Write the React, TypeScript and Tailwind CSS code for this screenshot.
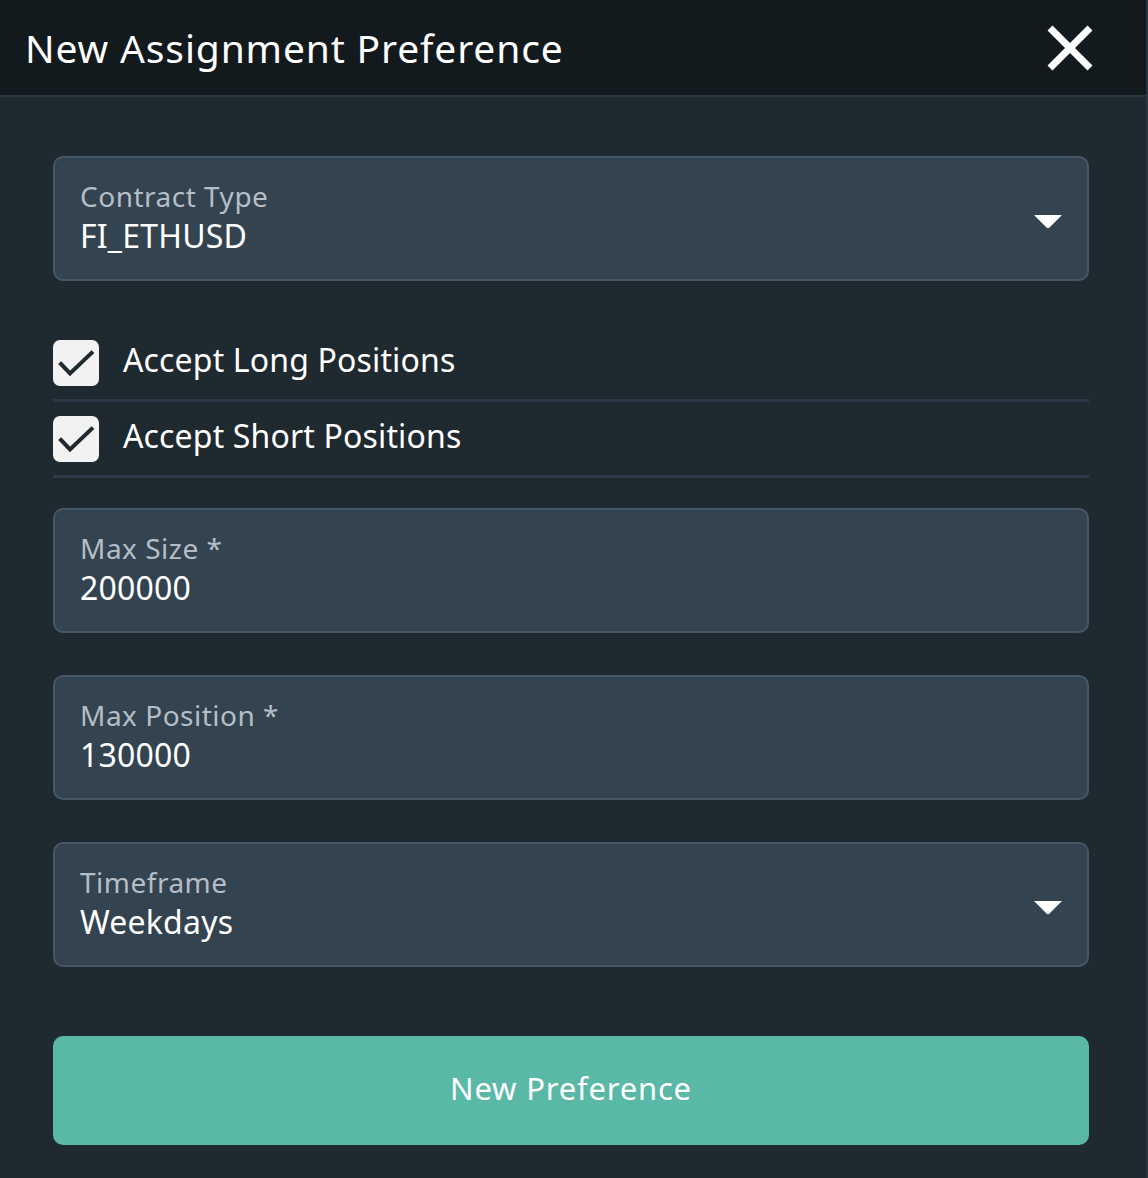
import React from "react";

const font = { fontFamily: '"Noto Sans", "Open Sans", sans-serif' };

function Caret() {
  return (
    <svg width="30" height="15" viewBox="0 0 30 15" className="shrink-0 mt-[6px]">
      <path d="M1 1 L29 1 L16.5 13.5 Q15 15 13.5 13.5 Z" fill="#ffffff" />
    </svg>
  );
}

function Field({ label, value, select }: { label: string; value: string; select?: boolean }) {
  return (
    <div className="h-[125px] rounded-[10px] border-2 border-[#475768] bg-[#334350] flex items-center pl-[25px] pr-[24px]">
      <div className="flex-1 flex flex-col pb-[3px]">
        <div className="text-[28px] leading-[38px] text-[#b5bec6] tracking-[0.5px]">{label}</div>
        <div className="text-[32px] leading-[42px] text-white tracking-[0.2px]">{value}</div>
      </div>
      {select && <Caret />}
    </div>
  );
}

function CheckRow({ label }: { label: string }) {
  return (
    <div className="flex items-center gap-[24px] h-[76px] border-b-[3px] border-[#2c3a47]">
      <div className="w-[46px] h-[46px] rounded-[7px] bg-[#f2f2f2] flex items-center justify-center shrink-0">
        <svg width="46" height="46" viewBox="0 0 46 46">
          <path d="M8 24 L17 33.5 L38.5 13" stroke="#1f2930" strokeWidth="4" fill="none" strokeLinecap="square" />
        </svg>
      </div>
      <div className="text-[32px] text-white tracking-[0.15px] pb-[5px]">{label}</div>
    </div>
  );
}

export default function App() {
  return (
    <div style={font} className="w-[1148px] h-[1178px] bg-[#1f2930] flex flex-col border-r-2 border-[#2a3640]">
      <div className="h-[97px] shrink-0 bg-[#131a1e] border-b-2 border-[#2a3640] flex items-center justify-between pl-[25px] pr-[52px]">
        <div className="text-[39px] text-white tracking-[0.85px] pt-[2px]">New Assignment Preference</div>
        <svg width="48" height="48" viewBox="0 0 48 48">
          <path d="M4 4 L44 44 M44 4 L4 44" stroke="#ffffff" strokeWidth="7" />
        </svg>
      </div>
      <div className="flex flex-col pl-[53px] pr-[57px] pt-[59px]">
        <Field label="Contract Type" value="FI_ETHUSD" select />
        <div className="mt-[45px] flex flex-col">
          <CheckRow label="Accept Long Positions" />
          <CheckRow label="Accept Short Positions" />
        </div>
        <div className="mt-[30px]">
          <Field label="Max Size *" value="200000" />
        </div>
        <div className="mt-[42px]">
          <Field label="Max Position *" value="130000" />
        </div>
        <div className="mt-[42px]">
          <Field label="Timeframe" value="Weekdays" select />
        </div>
        <button className="mt-[69px] h-[109px] rounded-[10px] bg-[#5ab8a6] text-white text-[31px] tracking-[0.8px] flex items-center justify-center pb-[4px]">
          New Preference
        </button>
      </div>
    </div>
  );
}
